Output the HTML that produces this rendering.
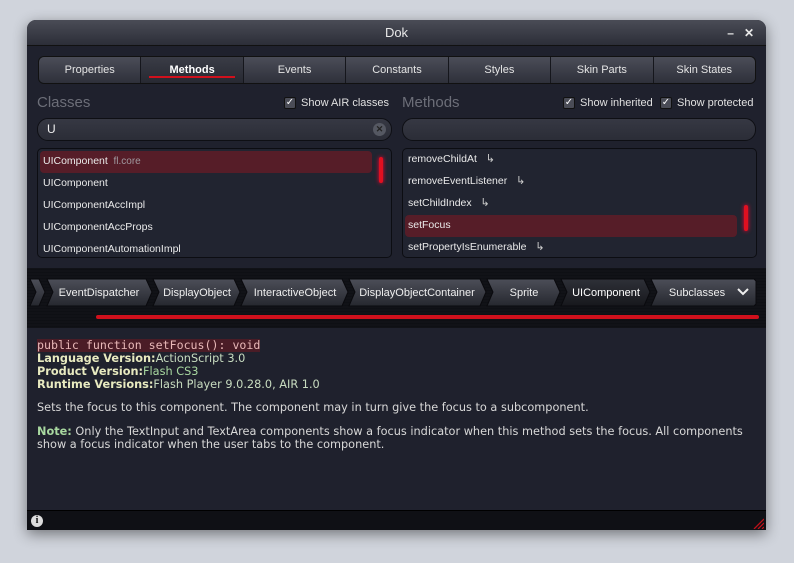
<!DOCTYPE html>
<html><head><meta charset="utf-8"><style>
*{box-sizing:border-box;margin:0;padding:0}
body{width:794px;height:563px;background:#d0d4dc;font-family:"Liberation Sans",sans-serif;position:relative;overflow:hidden}
.win{position:absolute;left:27px;top:20px;width:739px;height:510px;background:#1f212d;border-radius:9px 9px 0 0;box-shadow:0 4px 14px rgba(0,0,0,.45);overflow:hidden}
.title{height:26px;background:linear-gradient(#4a4c56,#2c2e38);border-bottom:1px solid #111;color:#e8e8e8;font-size:13px;text-align:center;line-height:26px}
.tabs{position:absolute;left:11px;top:36px;width:718px;height:28px;display:flex;border:1px solid #111;border-radius:6px;overflow:hidden}
.tabs div{flex:1;background:linear-gradient(#4b4d58,#2e303a);color:#e4e4e4;font-size:11px;text-align:center;line-height:27px;border-left:1px solid #15161c;position:relative}
.tabs div:first-child{border-left:none}
.tabs .act{background:linear-gradient(#3a3c46,#272932);color:#fff;font-weight:bold}
.tabs .act:after{content:"";position:absolute;left:8px;right:8px;bottom:5px;height:2px;background:#d0101c}
.lbl{position:absolute;color:#6c6e78;font-size:15px}
.chk{position:absolute;color:#e0e0e0;font-size:11px;display:flex;align-items:center}
.chk i{display:inline-block;width:12px;height:12px;background:#4a4c56;border:1px solid #111;border-radius:2px;margin-right:5px;color:#fff;font-style:normal;font-size:10px;line-height:10px;text-align:center}
.search{position:absolute;height:23px;border:1px solid #0e0f14;border-radius:11px;background:linear-gradient(#363843,#2b2d37);color:#eee;font-size:12px;padding-left:9px;line-height:21px}
.list{position:absolute;border:1px solid #0c0d12;border-radius:5px;background:#212430;overflow:hidden}
.list div{height:22px;line-height:21px;color:#eaeaea;font-size:10.5px;padding-left:3px;margin:0 19px 0 2px;border-radius:4px}
.list .sel{background:#561d28}
.list .sb{position:absolute;right:8px;width:4px;height:26px;background:#e01020;border-radius:2px;box-shadow:0 0 4px #f03}
.ar{color:#ccc;font-size:11px;margin-left:6px}
.crumbbar{position:absolute;left:0;top:248px;width:739px;height:60px;background:repeating-linear-gradient(#121318 0,#0d0e12 2px,#15161c 3px)}
.red{position:absolute;left:69px;top:295px;width:663px;height:4px;background:#d0101c;border-radius:2px}
.doc{position:absolute;left:10px;top:319px;width:722px;font-size:11.3px;color:#d8d8d8;font-family:"DejaVu Sans",sans-serif}
.status{position:absolute;left:0;top:490px;width:739px;height:20px;background:#0f1015;border-top:1px solid #000}
</style></head><body>
<div class="win">
<div class="title">Dok<span style="position:absolute;right:12px;top:0;font-weight:bold;font-size:12px">–&nbsp;&nbsp;&nbsp;✕</span></div>
<div class="tabs"><div>Properties</div><div class="act">Methods</div><div>Events</div><div>Constants</div><div>Styles</div><div>Skin Parts</div><div>Skin States</div></div>
<div class="lbl" style="left:10px;top:74px">Classes</div>
<div class="chk" style="left:257px;top:77px"><i>✓</i>Show AIR classes</div>
<div class="lbl" style="left:375px;top:74px">Methods</div>
<div class="chk" style="left:536px;top:77px"><i>✓</i>Show inherited</div>
<div class="chk" style="left:633px;top:77px"><i>✓</i>Show protected</div>
<div class="search" style="left:10px;top:98px;width:355px">U<span style="position:absolute;right:5px;top:4px;width:13px;height:13px;border-radius:50%;background:#555862;color:#222;font-size:9px;line-height:13px;text-align:center;font-weight:bold">✕</span></div>
<div class="search" style="left:375px;top:98px;width:354px"></div>
<div class="list" style="left:10px;top:128px;width:355px;height:110px;padding-top:2px">
<div class="sel">UIComponent <span style="color:#a09aa0;font-size:10px">&nbsp;fl.core</span></div><div>UIComponent</div><div>UIComponentAccImpl</div><div>UIComponentAccProps</div><div>UIComponentAutomationImpl</div>
<span class="sb" style="top:8px"></span></div>
<div class="list" style="left:375px;top:128px;width:355px;height:110px">
<div>removeChildAt <span class="ar">↳</span></div><div>removeEventListener <span class="ar">↳</span></div><div>setChildIndex <span class="ar">↳</span></div><div class="sel">setFocus</div><div>setPropertyIsEnumerable <span class="ar">↳</span></div>
<span class="sb" style="top:56px"></span></div>
<div class="crumbbar">
<svg width="739" height="60" style="position:absolute;left:0;top:0" font-family="Liberation Sans" font-size="11" fill="#eee">
<defs><linearGradient id="g" x1="0" y1="0" x2="0" y2="1"><stop offset="0" stop-color="#4c4e58"/><stop offset="1" stop-color="#26282f"/></linearGradient>
<linearGradient id="g2" x1="0" y1="0" x2="0" y2="1"><stop offset="0" stop-color="#2e3038"/><stop offset="1" stop-color="#17181d"/></linearGradient></defs>
<polygon points="3,11 12,11 18,24 12,38 3,38 9,24" fill="url(#g)" stroke="#0a0a0e"/>
<polygon points="20,11 119,11 125,24 119,38 20,38 26,24" fill="url(#g)" stroke="#0a0a0e"/><text x="72" y="28" text-anchor="middle">EventDispatcher</text>
<polygon points="126,11 207,11 213,24 207,38 126,38 132,24" fill="url(#g)" stroke="#0a0a0e"/><text x="170" y="28" text-anchor="middle">DisplayObject</text>
<polygon points="214,11 315,11 321,24 315,38 214,38 220,24" fill="url(#g)" stroke="#0a0a0e"/><text x="268" y="28" text-anchor="middle">InteractiveObject</text>
<polygon points="322,11 453,11 459,24 453,38 322,38 328,24" fill="url(#g)" stroke="#0a0a0e"/><text x="390" y="28" text-anchor="middle">DisplayObjectContainer</text>
<polygon points="460,11 527,11 533,24 527,38 460,38 466,24" fill="url(#g)" stroke="#0a0a0e"/><text x="497" y="28" text-anchor="middle">Sprite</text>
<polygon points="534,11 617,11 623,24 617,38 534,38 540,24" fill="url(#g2)" stroke="#0a0a0e"/><text x="579" y="28" text-anchor="middle" fill="#fff">UIComponent</text>
<polygon points="624,11 727,11 729,13 729,36 727,38 624,38 630,24" fill="url(#g)" stroke="#0a0a0e"/><text x="670" y="28" text-anchor="middle">Subclasses</text>
<path d="M711 21 L716 26 L721 21" stroke="#eee" stroke-width="2" fill="none"/>
</svg></div>
<div class="red"></div>
<div class="doc">
<div style="font-family:'DejaVu Sans Mono',monospace;font-size:11.6px;color:#e8b8b8;background:#4a1c26;display:inline-block;line-height:13px">public function setFocus(): void</div>
<div style="line-height:13px"><b style="color:#e8eac0">Language Version:</b><span style="color:#c8dcc0">ActionScript 3.0</span></div>
<div style="line-height:13px"><b style="color:#e8eac0">Product Version:</b><span style="color:#a8d8a0">Flash CS3</span></div>
<div style="line-height:13px"><b style="color:#e8eac0">Runtime Versions:</b><span style="color:#c8dcc0">Flash Player 9.0.28.0, AIR 1.0</span></div>
<div style="margin-top:10px;line-height:13px">Sets the focus to this component. The component may in turn give the focus to a subcomponent.</div>
<div style="margin-top:11px;line-height:13px"><b style="color:#a8d8a0">Note:</b> Only the TextInput and TextArea components show a focus indicator when this method sets the focus. All components show a focus indicator when the user tabs to the component.</div>
</div>
<div class="status"><span style="position:absolute;left:4px;top:4px;width:12px;height:12px;border-radius:50%;background:#ddd;color:#111;font-size:10px;font-weight:bold;text-align:center;line-height:12px;font-family:'Liberation Serif',serif">i</span>
<svg width="12" height="12" style="position:absolute;right:2px;top:6px"><path d="M2 12 L12 2 M6 12 L12 6 M10 12 L12 10" stroke="#c01018" stroke-width="1.3"/></svg></div>
</div>
</body></html>
